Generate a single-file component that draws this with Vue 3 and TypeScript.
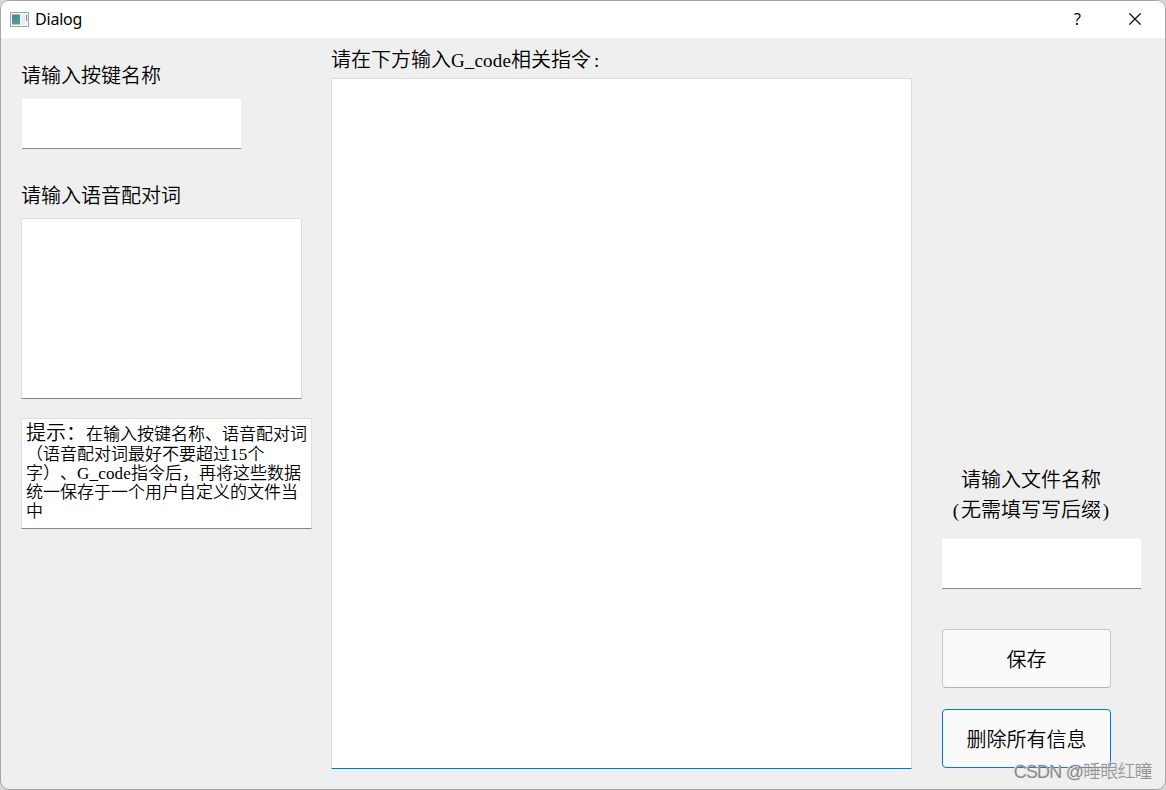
<script lang="ts" setup>
import {ref} from "vue";

const keyName = ref('')
const voiceWords = ref('')
const gcode = ref('')
const fileName = ref('')

const clearAll = () => {
  keyName.value = ''
  voiceWords.value = ''
  gcode.value = ''
  fileName.value = ''
}
</script>


<template>
  <div class="desktop">
    <div class="dialog">
      <header class="titlebar">
        <svg class="app-icon" width="19" height="15" viewBox="0 0 19 15">
          <defs>
            <linearGradient id="pane" x1="0" y1="0" x2="0.4" y2="1">
              <stop offset="0" stop-color="#4a78a4"/>
              <stop offset="1" stop-color="#4fa87c"/>
            </linearGradient>
          </defs>
          <rect x="0.5" y="0.5" width="18" height="14" fill="#f7f7f7" stroke="#9da3a8"/>
          <rect x="2" y="2.5" width="8" height="10" fill="url(#pane)"/>
          <rect x="11" y="2.5" width="4" height="10" fill="#ececec"/>
          <rect x="16" y="3" width="1.2" height="6" fill="#5f9f9c"/>
        </svg>
        <span class="title">Dialog</span>
        <span class="help">?</span>
        <svg class="close" width="12" height="12" viewBox="0 0 12 12">
          <path d="M0.4 0.4L11.6 11.6M11.6 0.4L0.4 11.6" stroke="#111" stroke-width="1.25" fill="none"/>
        </svg>
      </header>

      <main class="body">
        <section class="left">
          <label class="label">请输入按键名称</label>
          <input v-model="keyName" class="field key" type="text">
          <label class="label voice-label">请输入语音配对词</label>
          <textarea v-model="voiceWords" class="field boxed voice"></textarea>
          <div class="field boxed hint">
            <p class="first"><span class="lead">提示：</span>在输入按键名称、语音配对词</p>
            <p>（语音配对词最好不要超过<span class="latin">15</span>个</p>
            <p>字）、<span class="latin">G_code</span>指令后，再将这些数据</p>
            <p>统一保存于一个用户自定义的文件当</p>
            <p>中</p>
          </div>
        </section>

        <section class="middle">
          <label class="label">请在下方输入<span class="latin">G_code</span>相关指令<span class="latin colon">:</span></label>
          <textarea v-model="gcode" class="field boxed gcode"></textarea>
        </section>

        <section class="right">
          <label class="label file-label">请输入文件名称<br><span class="latin paren">(</span>无需填写写后缀<span class="latin paren">)</span></label>
          <input v-model="fileName" class="field file" type="text">
          <button class="btn">保存</button>
          <button class="btn default" @click="clearAll">删除所有信息</button>
        </section>
      </main>
    </div>
    <div class="watermark">CSDN @睡眼红瞳</div>
  </div>
</template>


<style>
body {
  margin: 0;
  overflow: hidden;
}
</style>

<style scoped>
* {
  box-sizing: border-box;
}

.desktop {
  position: relative;
  width: 1166px;
  height: 790px;
  background: #d8d8d8;
  font-family: "Liberation Sans", "Noto Sans CJK SC", sans-serif;
  text-spacing-trim: space-all;
  color: #000;
}

.dialog {
  height: 790px;
  display: flex;
  flex-direction: column;
  background: #efefef;
  border: 1px solid #a6a6a6;
  border-radius: 9px;
  overflow: hidden;
}

.titlebar {
  display: flex;
  align-items: center;
  height: 37px;
  padding: 0 24px 0 9px;
  background: #fff;
  flex: none;
}

.title {
  margin: -2px 0 0 6px;
  font: 16px "Noto Sans", sans-serif;
  letter-spacing: -0.2px;
}

.help {
  margin: -2px 48px 0 auto;
  font: 16px "Noto Sans", sans-serif;
}

.close {
  margin-top: -1px;
}

.body {
  display: flex;
  align-items: flex-start;
}

.left {
  display: flex;
  flex-direction: column;
  width: 330px;
  padding: 22px 0 0 20px;
}

.middle {
  display: flex;
  flex-direction: column;
  width: 581px;
  padding-top: 7px;
}

.right {
  display: flex;
  flex-direction: column;
  margin-left: 29px;
  padding-top: 427px;
}

.label {
  font-size: 20px;
  font-weight: 350;
  line-height: 30px;
  height: 30px;
  white-space: nowrap;
}

.left .label {
  padding-top: 1px;
}

.label .latin {
  font: 19px/1 "Liberation Serif", serif;
  letter-spacing: 0.15px;
}

.label .colon {
  margin-left: 3px;
}

.label .paren {
  display: inline-block;
  width: 10px;
  text-align: center;
}

.field {
  display: block;
  margin: 0;
  padding: 4px;
  resize: none;
  outline: none;
  border: 0;
  border-top: 1px solid #f4f4f4;
  border-bottom: 1px solid #868686;
  border-radius: 0;
  background: #fff;
}

.boxed {
  border: 1px solid #dedede;
  border-bottom-color: #868686;
}

.key {
  width: 219px;
  height: 51px;
  margin: 8px 0 0 1px;
}

.voice-label {
  margin-top: 31px;
}

.voice {
  width: 281px;
  height: 181px;
  margin-top: 8px;
}

.hint {
  width: 291px;
  height: 111px;
  margin-top: 19px;
  font-size: 17px;
  font-weight: 350;
}

.hint p {
  margin: 0;
  height: 19px;
  line-height: 19px;
  white-space: nowrap;
}

.hint .first {
  height: 22px;
  line-height: 21px;
}

.hint .lead {
  font-size: 20px;
}

.hint .latin {
  font: 17px/1 "Liberation Serif", serif;
  letter-spacing: 0.2px;
}

.gcode {
  width: 581px;
  height: 691px;
  margin-top: 3px;
  border-bottom-color: #0078d4;
}

.file-label {
  height: 60px;
  width: 180px;
  text-align: center;
}

.file {
  width: 199px;
  height: 51px;
  margin: 13px 0 0 1px;
}

.btn {
  width: 169px;
  height: 59px;
  margin: 40px 0 0 1px;
  padding: 0;
  border: 1px solid #c6c6c6;
  border-bottom-color: #b4b4b4;
  border-radius: 4px;
  background: #fafafa;
  color: #000;
  font: 350 20px "Noto Sans CJK SC", sans-serif;
}

.btn.default {
  margin-top: 21px;
  border-color: #0078d4;
}

.watermark {
  position: absolute;
  right: 14px;
  bottom: 5px;
  font-size: 18px;
  font-weight: 300;
  line-height: 26px;
  letter-spacing: -0.8px;
  color: #8a8a8a;
  text-shadow: -1px -1px 0 #e4e4e4;
  white-space: nowrap;
}
</style>
